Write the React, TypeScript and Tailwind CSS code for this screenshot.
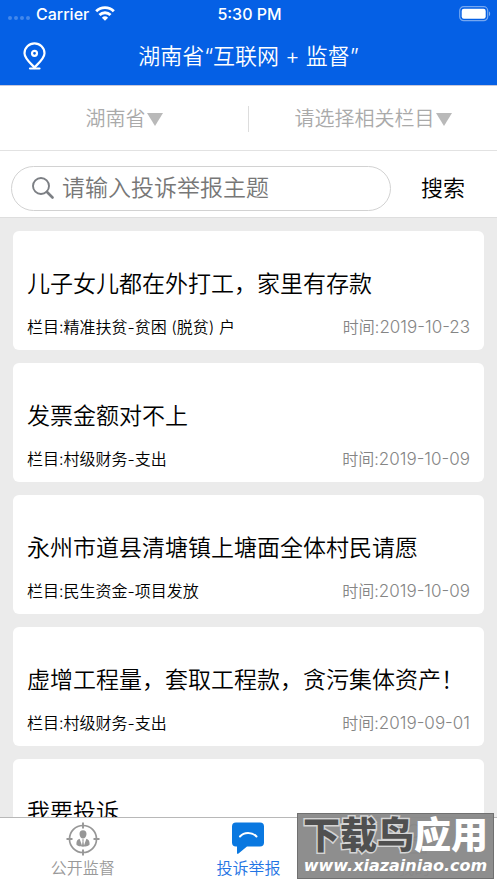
import { useState } from "react";

interface Complaint {
  id: number;
  title: string;
  column: string;
  date: string;
}

const complaints: Complaint[] = [
  { id: 1, title: "儿子女儿都在外打工，家里有存款", column: "精准扶贫-贫困 (脱贫) 户", date: "2019-10-23" },
  { id: 2, title: "发票金额对不上", column: "村级财务-支出", date: "2019-10-09" },
  { id: 3, title: "永州市道县清塘镇上塘面全体村民请愿", column: "民生资金-项目发放", date: "2019-10-09" },
  { id: 4, title: "虚增工程量，套取工程款，贪污集体资产！", column: "村级财务-支出", date: "2019-09-01" },
  { id: 5, title: "我要投诉", column: "村级财务-支出", date: "2019-09-01" },
];

function WifiIcon() {
  return (
    <svg viewBox="0 0 20 15" className="h-[15px] w-5" fill="none" stroke="currentColor" strokeWidth="2.9">
      <path d="M1.2 5.2a12.6 12.6 0 0 1 17.6 0" />
      <path d="M4.5 9a7.9 7.9 0 0 1 11 0" />
      <path d="M10 14.8 6.9 11.7a4.5 4.5 0 0 1 6.2 0Z" fill="currentColor" stroke="none" />
    </svg>
  );
}

function BatteryIcon() {
  return (
    <svg viewBox="0 0 32 16" className="h-4 w-8" fill="none">
      <rect x="0.7" y="0.7" width="28" height="14" rx="4" stroke="#fff" strokeOpacity="0.45" strokeWidth="1.2" />
      <rect x="2.7" y="2.7" width="24" height="10" rx="2.2" fill="#fff" />
      <path d="M30 5.5c1.5.6 1.5 3.9 0 4.5Z" fill="#fff" fillOpacity="0.5" />
    </svg>
  );
}

function PinIcon() {
  return (
    <svg viewBox="0 0 24 28" className="h-7 w-6" fill="none" stroke="currentColor" strokeWidth="2.2">
      <path d="M12.5 25.5C9 21.5 2.5 16.5 2.5 11.2a10 9.9 0 0 1 20 0C22.5 16.5 16 21.5 12.5 25.5Z" />
      <circle cx="12.5" cy="11.3" r="2.5" />
      <path d="M8 26.5h9.5" strokeLinecap="round" />
    </svg>
  );
}

function SearchIcon() {
  return (
    <svg viewBox="0 0 22 22" className="h-[22px] w-[22px] shrink-0" fill="none" stroke="#7c7f84" strokeLinecap="round">
      <circle cx="9" cy="9" r="8" strokeWidth="1.9" />
      <path d="m15 15 5.5 5.5" strokeWidth="2.6" />
    </svg>
  );
}

function TargetPersonIcon() {
  return (
    <svg viewBox="0 0 34 34" className="h-[34px] w-[34px]" fill="none" stroke="#979797">
      <circle cx="17" cy="17" r="13.5" strokeWidth="1.7" />
      <path d="M17 .5v6M17 27.5v6M.5 17h6M27.5 17h6" strokeWidth="1.9" />
      <g fill="#979797" stroke="none">
        <path d="M17 8.300c2.300 0 3.600 1.500 3.500 3.700-.1 2.500-1.600 4.600-3.500 4.600s-3.400-2.100-3.500-4.600c-.1-2.200 1.200-3.700 3.500-3.700Z" />
        <path d="M13.600 16.800 16 23.600l.6-4.800-.7-1.200h2.200l-.7 1.200.6 4.800 2.400-6.800c2.300.7 3.200 2.200 3.200 5.300 0 1.800-3.200 2.600-6.600 2.600s-6.600-.8-6.600-2.600c0-3.100.9-4.600 3.200-5.300Z" />
      </g>
    </svg>
  );
}

function ChatIcon() {
  return (
    <svg viewBox="0 0 34 34" className="h-[34px] w-[34px]" fill="none">
      <path d="M5 .5h24a4 4 0 0 1 4 4v16a4 4 0 0 1-4 4H16L7.5 31.5C6.5 32.3 6 32 6 30.8v-6.3H5a4 4 0 0 1-4-4v-16a4 4 0 0 1 4-4Z" fill="#0a78e0" />
      <path d="M9 14.5c4-4.800 12-4.800 16.500 0" stroke="#fff" strokeWidth="2" strokeLinecap="round" />
    </svg>
  );
}

function ProfileIcon() {
  return (
    <svg viewBox="0 0 34 34" className="h-[34px] w-[34px]" fill="none" stroke="#979797" strokeWidth="1.7">
      <circle cx="17" cy="9" r="6.5" />
      <path d="M5 31c0-8 5-12.5 12-12.5S29 23 29 31Z" />
    </svg>
  );
}

const tabs = [
  { label: "公开监督", Icon: TargetPersonIcon },
  { label: "投诉举报", Icon: ChatIcon },
  { label: "我的", Icon: ProfileIcon },
];

function FilterSelect({ name, label }: { name: string; label: string }) {
  return (
    <div className="flex flex-1 justify-center">
      <div className="relative flex items-center">
        <select
          aria-label={name}
          className="field-sizing-content appearance-none bg-transparent pr-[17px] text-xl leading-7 font-[350] text-[#aaa] outline-none"
        >
          <option>{label}</option>
        </select>
        <svg viewBox="0 0 16 13" className="pointer-events-none absolute right-0 h-[13px] w-4" fill="#b9b9b9">
          <path d="M0 0h16L8 13Z" />
        </svg>
      </div>
    </div>
  );
}

function ComplaintCard({ title, column, date }: Complaint) {
  return (
    <li className="rounded-md bg-white px-3.5 pt-[37px] pb-2.5">
      <h2 className="truncate text-[23px] leading-8 font-[350] text-black">{title}</h2>
      <div className="mt-[15px] flex items-center justify-between text-base leading-[25px] font-[350]">
        <p className="text-black">栏目:{column}</p>
        <p className="text-[#858585]">
          时间:<time dateTime={date} className="text-[17px]">{date}</time>
        </p>
      </div>
    </li>
  );
}

export default function App() {
  const [active, setActive] = useState("投诉举报");
  const [keyword, setKeyword] = useState("");

  return (
    <div className="relative flex h-screen flex-col overflow-hidden bg-[#ebebeb] font-['Inter','Noto_Sans_CJK_SC',sans-serif]">
      <header className="shrink-0 border-b border-[#c8c8da] bg-[#0560e5] text-white">
        <div className="grid h-[27px] grid-cols-3 items-center pr-1.5 pl-2 text-base font-medium">
          <div className="flex items-center">
            <span className="flex gap-0.5 pt-2">
              {[1, 2, 3, 4].map((n) => (
                <span key={n} className="size-1 rounded-full bg-white/25" />
              ))}
            </span>
            <span className="mr-1.5 ml-1.5">Carrier</span>
            <WifiIcon />
          </div>
          <span className="text-center">5:30 PM</span>
          <span className="flex justify-end">
            <BatteryIcon />
          </span>
        </div>
        <div className="grid h-[58px] grid-cols-[40px_1fr_40px] items-center px-[22px]">
          <button type="button" aria-label="定位">
            <PinIcon />
          </button>
          <h1 className="text-center text-[22px] leading-8 font-[350] whitespace-nowrap">湖南省“互联网 + 监督”</h1>
        </div>
      </header>

      <div className="flex h-[65px] shrink-0 items-center border-b border-[#e2e2e2] bg-white pt-0.5">
        <FilterSelect name="地区" label="湖南省" />
        <span className="h-[26px] w-px bg-[#ddd]" />
        <FilterSelect name="栏目" label="请选择相关栏目" />
      </div>

      <form
        onSubmit={(e) => e.preventDefault()}
        className="flex h-[67px] shrink-0 items-center border-b border-[#dedede] bg-white pt-2 pr-8 pl-[11px]"
      >
        <label className="mr-[30px] flex h-[45px] min-w-0 flex-1 items-center gap-2 rounded-full border border-[#d2d2d2] pr-4 pl-5">
          <SearchIcon />
          <input
            type="text"
            aria-label="投诉举报主题"
            placeholder="请输入投诉举报主题"
            value={keyword}
            onChange={(e) => setKeyword(e.target.value)}
            className="min-w-0 flex-1 bg-transparent text-[23px] leading-8 font-[350] text-[#333] outline-none placeholder:text-[#777]"
          />
        </label>
        <button type="submit" className="text-[22px] leading-8 font-[350] text-black">
          搜索
        </button>
      </form>

      <main className="min-h-0 flex-1 overflow-hidden px-[13px] pt-[13px]">
        <ul className="flex flex-col gap-[13px]">
          {complaints.map((item) => (
            <ComplaintCard key={item.id} {...item} />
          ))}
        </ul>
      </main>

      <nav className="grid h-[66px] shrink-0 grid-cols-3 border-t border-[#b8b8b8] bg-white">
        {tabs.map(({ label, Icon }) => (
          <button
            key={label}
            type="button"
            onClick={() => setActive(label)}
            className={`flex flex-col items-center pt-1 text-base leading-[25px] font-[350] ${
              active === label ? "text-[#1f74e4]" : "text-[#999]"
            }`}
          >
            <Icon />
            {label}
          </button>
        ))}
      </nav>

      <div className="absolute right-[3px] bottom-1 flex h-[66px] w-[197px] flex-col items-center justify-center border border-[#707070] bg-[#888]/95 whitespace-nowrap">
        <p className="pt-1 text-[37px] leading-9 font-black text-white">
          <span className="text-[#505050] [paint-order:stroke_fill] [-webkit-text-stroke:3px_#d4d4d4]">下载鸟</span>
          应用
        </p>
        <p className="font-['DejaVu_Sans',sans-serif] text-base leading-6 font-bold text-white italic">
          www.xiazainiao.com
        </p>
      </div>
    </div>
  );
}
